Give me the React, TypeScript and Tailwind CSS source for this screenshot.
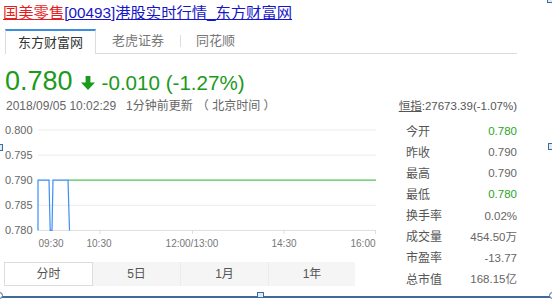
import React from "react";

const stats: { k: string; v: string; g?: boolean }[] = [
  { k: "今开", v: "0.780", g: true },
  { k: "昨收", v: "0.790" },
  { k: "最高", v: "0.790" },
  { k: "最低", v: "0.780", g: true },
  { k: "换手率", v: "0.02%" },
  { k: "成交量", v: "454.50万" },
  { k: "市盈率", v: "-13.77" },
  { k: "总市值", v: "168.15亿" },
];

function Chart() {
  const ys = [12, 37.1, 62.2, 87.3, 112.4];
  const labels = ["0.800", "0.795", "0.790", "0.785", "0.780"];
  return (
    <svg width="380" height="136" className="block">
      {ys.map((y, i) => (
        <line key={i} x1="38" x2="376" y1={y} y2={y} stroke={i === 4 ? "#dedede" : "#ececec"} strokeWidth="1" />
      ))}
      {[100, 192.5, 284, 375.5].map((x) => (
        <line key={x} x1={x} x2={x} y1="112.4" y2="116" stroke="#dedede" strokeWidth="1" />
      ))}
      {labels.map((l, i) => (
        <text key={l} x="5" y={ys[i] + 4} fontSize="11" fill="#666" fontFamily="Liberation Sans, sans-serif">
          {l}
        </text>
      ))}
      {[
        ["09:30", 51],
        ["10:30", 99],
        ["12:00/13:00", 192],
        ["14:30", 284],
        ["16:00", 363],
      ].map(([t, x]) => (
        <text key={t as string} x={x as number} y="128.5" fontSize="10" fill="#777" textAnchor="middle" fontFamily="Liberation Sans, sans-serif">
          {t}
        </text>
      ))}
      <path d="M68,62.2 L376,62.2" stroke="#55c855" strokeWidth="1.3" fill="none" />
      <path
        d="M38,112.4 L38,62.2 L49,62.2 L50.2,112.4 L52,112.4 L53,62.2 L68,62.2 L69.5,112.4"
        stroke="#3d8ef5"
        strokeWidth="1.2"
        fill="none"
      />
    </svg>
  );
}

export default function App() {
  return (
    <div className="relative w-[552px] h-[299px] overflow-hidden bg-white font-['Liberation_Sans','Noto_Sans_CJK_SC',sans-serif]">
      {/* title */}
      <div className="pl-[3px] pt-[3px] h-[23px] text-[15.3px] leading-[20px] whitespace-nowrap">
        <span className="text-[#e41e1e] underline">国美零售</span>
        <span className="text-[#1616c8] underline">[00493]港股实时行情_东方财富网</span>
      </div>

      {/* source tabs */}
      <div className="mt-[6px] ml-[5px] w-[512px] h-[25px] flex border-b border-[#dcdcdc] text-[13px]">
        <div className="relative z-10 w-[91px] h-[25px] bg-white border-t-2 border-t-[#3b8de0] border-x border-x-[#dcdcdc] flex items-center justify-center text-[#333]">
          东方财富网
        </div>
        <div className="w-[84px] flex items-center justify-center text-[#777]">老虎证券</div>
        <div className="w-px h-[12px] self-center bg-[#dedede]" />
        <div className="w-[69px] flex items-center justify-center text-[#777]">同花顺</div>
      </div>

      {/* price */}
      <div className="mt-[11px] h-[32px] pl-[5px] flex items-baseline text-[#1c9a1c] leading-[32px]">
        <span className="text-[27px]">0.780</span>
        <svg width="14" height="14" viewBox="0 0 14 14" className="ml-[8px]">
          <path d="M4.6,0 H9.4 V6.6 H14 L7,14 L0,6.6 H4.6 Z" fill="#1c9a1c" />
        </svg>
        <span className="ml-[7px] text-[20.6px]">-0.010 (-1.27%)</span>
      </div>

      {/* time + index */}
      <div className="mt-[1px] h-[16px] w-[517px] flex justify-between items-center leading-[16px] whitespace-nowrap">
        <span className="pl-[6px] text-[12px] text-[#666]">
          2018/09/05 10:02:29<span className="ml-[10px]">1分钟前更新</span>
          <span className="ml-[4px]">（ 北京时间 ）</span>
        </span>
        <span className="text-[11.5px] text-[#555]">
          <span className="underline">恒指</span>:27673.39(-1.07%)
        </span>
      </div>

      {/* main */}
      <div className="mt-[4px] flex">
        <div className="w-[380px]">
          <Chart />
          <div className="mt-[8px] ml-[4px] w-[351px] h-[24px] flex bg-[#f5f5f5] text-[12px] text-[#555]">
            <div className="w-[89px] bg-white border border-[#dddddd] flex items-center justify-center">分时</div>
            <div className="w-[88px] flex items-center justify-center border-r border-[#ececec]">5日</div>
            <div className="w-[88px] flex items-center justify-center border-r border-[#ececec]">1月</div>
            <div className="flex-1 flex items-center justify-center">1年</div>
          </div>
        </div>
        <div className="ml-[20px] w-[117px] pt-[3px] text-[12px]">
          {stats.map((s) => (
            <div key={s.k} className="h-[21.15px] pl-[6px] flex items-center justify-between">
              <span className="text-[#555]">{s.k}</span>
              <span className={s.g ? "text-[11.5px] text-[#2aa52a]" : "text-[11.5px] text-[#666]"}>{s.v}</span>
            </div>
          ))}
        </div>
      </div>

      {/* selection overlay */}
      <div className="absolute left-0 right-0 top-[296px] h-[2px] bg-[#3e6a9c]" />
      <div className="absolute left-[257px] top-[292px] w-[7px] h-[6px] bg-[#dcecf9] border border-[#3e6a9c]" />
      <div className="absolute left-[-3px] top-[144px] w-[6px] h-[7px] bg-[#dcecf9] border border-[#3e6a9c]" />
      <div className="absolute left-[548px] top-[143px] w-[7px] h-[7px] bg-[#dcecf9] border border-[#3e6a9c]" />
      <div className="absolute left-[547px] top-[-3px] w-[7px] h-[6px] bg-[#dcecf9] border border-[#3e6a9c]" />
      <div className="absolute left-[-4px] top-[292px] w-[7px] h-[7px] rounded-full border border-[#3e6a9c] bg-white" />
      <div className="absolute left-[549px] top-[292px] w-[7px] h-[7px] rounded-full border border-[#3e6a9c] bg-white" />
    </div>
  );
}
